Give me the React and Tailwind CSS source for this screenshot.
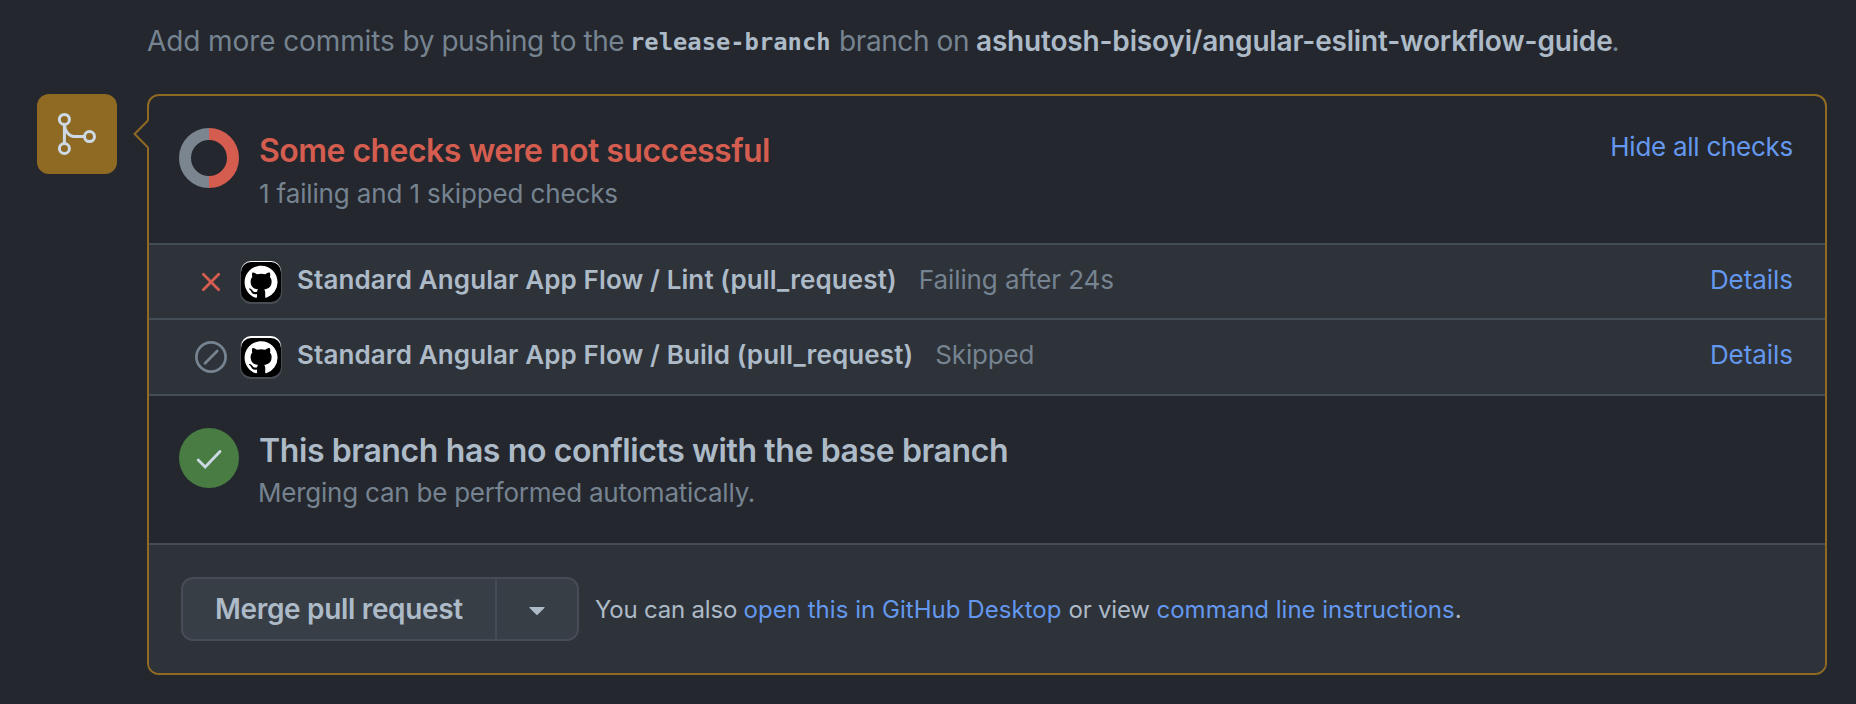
const OCTOCAT =
  "M8 0C3.58 0 0 3.58 0 8c0 3.54 2.29 6.53 5.47 7.59.4.07.55-.17.55-.38 0-.19-.01-.82-.01-1.49-2.01.37-2.53-.49-2.69-.94-.09-.23-.48-.94-.82-1.13-.28-.15-.68-.52-.01-.53.63-.01 1.08.58 1.23.82.72 1.21 1.87.87 2.33.66.07-.52.28-.87.51-1.07-1.78-.2-3.64-.89-3.64-3.95 0-.87.31-1.59.82-2.15-.08-.2-.36-1.02.08-2.12 0 0 .67-.21 2.2.82.64-.18 1.32-.27 2-.27.68 0 1.36.09 2 .27 1.53-1.04 2.2-.82 2.2-.82.44 1.1.16 1.92.08 2.12.51.56.82 1.27.82 2.15 0 3.07-1.87 3.75-3.65 3.95.29.25.54.73.54 1.48 0 1.07-.01 1.93-.01 2.2 0 .21.15.46.55.38A8.013 8.013 0 0016 8c0-4.42-3.58-8-8-8z";

function MergeIcon() {
  return (
    <svg width="80" height="80" viewBox="0 0 80 80" fill="none" stroke="#cdd9e5" strokeWidth="3">
      <circle cx="27.4" cy="25.4" r="5" />
      <circle cx="27.4" cy="54.5" r="5" />
      <circle cx="52.5" cy="42.6" r="5" />
      <path d="M27.4 30.5V49.5M27.4 30.5C27.8 37.5 32 42.6 39 42.6H47.5" />
    </svg>
  );
}

function Donut() {
  return (
    <svg className="shrink-0" width="60" height="60" viewBox="0 0 60 60" fill="none" strokeWidth="12">
      <path d="M30 6A24 24 0 0 0 30 54" stroke="#7b858f" />
      <path d="M30 6A24 24 0 0 1 30 54" stroke="#d45d50" />
    </svg>
  );
}

function FailIcon() {
  return (
    <svg width="32" height="32" viewBox="0 0 32 32" fill="none" stroke="#d45d50" strokeWidth="2.8" strokeLinecap="round">
      <path d="M8.3 8.3L23.7 23.7M23.7 8.3L8.3 23.7" />
    </svg>
  );
}

function SkipIcon() {
  return (
    <svg width="32" height="32" viewBox="0 0 32 32" fill="none" stroke="#768390" strokeWidth="2.7" strokeLinecap="round">
      <circle cx="16" cy="16" r="14.6" />
      <path d="M10 22.2L22.2 10" />
    </svg>
  );
}

function Avatar({ highlight }) {
  return (
    <svg className="overflow-visible" width="40" height="42" viewBox="0 0 40 42">
      <rect x="-1" y="0.5" width="42" height="42.5" rx="11" fill="#484d54" />
      <rect width="40" height="38" rx="10" fill="#fff" />
      <rect y={highlight} width="40" height={41 - highlight} rx="10" fill="#000" />
      <path d={OCTOCAT} fill="#fff" transform={`translate(3.6 ${4.2 + highlight / 2}) scale(2.06)`} />
    </svg>
  );
}

function CheckRow({ icon, name, status, nameClass, statusClass, rowClass, highlight }) {
  return (
    <div className={`flex items-start border-t-2 border-[#444c56] bg-[#2e3239] pr-8 pl-[46px] text-[26px] leading-9 ${rowClass}`}>
      <div className="mt-[21px] h-8 w-8">{icon}</div>
      <div className="mt-4 ml-[14px] h-[42px] w-10">
        <Avatar highlight={highlight} />
      </div>
      <span className={`mt-[17px] ml-4 font-semibold text-[#adbac7] ${nameClass}`}>{name}</span>
      <span className={`mt-[17px] ml-[22px] text-[#768390] ${statusClass}`}>{status}</span>
      <a className="mt-[17px] ml-auto tracking-[-0.05px] text-[#6498ee]">Details</a>
    </div>
  );
}

export default function App() {
  return (
    <div className="h-[704px] w-[1856px] overflow-hidden bg-[#24272e] font-['Inter',sans-serif] whitespace-nowrap">
      <p className="flex h-[94px] items-start pt-[23px] pl-[147px] text-[28px] leading-9 text-[#768390]">
        <span className="w-[483px] tracking-[-0.12px]">
          <span className="tracking-[-0.1px]">Add more commits </span>
          <span className="tracking-[-0.45px]">by pushing to the</span>
        </span>
        <span className="w-[209px] pt-px font-['DejaVu_Sans_Mono',monospace] text-[23.8px] font-bold text-[#adbac7]">release-branch</span>
        <span className="w-[137px] tracking-[-0.4px]">branch on</span>
        <span className="font-semibold tracking-[-0.18px] text-[#adbac7]">ashutosh-bisoyi/angular-eslint-workflow-guide</span>
        <span className="-ml-px">.</span>
      </p>

      <div className="flex items-start pl-[37px]">
        <div className="h-20 w-20 rounded-xl bg-[#8f6a23]">
          <MergeIcon />
        </div>

        <div className="relative ml-[30px] h-[581px] w-[1680px] rounded-xl border-2 border-[#8f6a23]">
          <svg className="absolute top-[23px] left-[-17px]" width="18" height="30" viewBox="0 0 18 30" fill="none">
            <path d="M18 1.5L15 1.5L3 15L15 28.5L18 28.5Z" fill="#24272e" />
            <path d="M16.2 1.2L2.6 15L16.2 28.8" stroke="#8f6a23" strokeWidth="2" />
          </svg>

          <div className="flex h-[147px] items-start pt-8 pr-8 pl-[30px]">
            <Donut />
            <div className="ml-[19px] pt-[3px]">
              <h3 className="ml-px text-[32px] leading-10 font-semibold tracking-[-0.53px] text-[#d45d50]">Some checks were not successful</h3>
              <p className="ml-px mt-[5px] text-[26px] leading-9 tracking-[-0.14px] text-[#768390]">1 failing and 1 skipped checks</p>
            </div>
            <a className="mt-px ml-auto text-[26px] leading-9 tracking-[-0.27px] text-[#6498ee]">Hide all checks</a>
          </div>

          <CheckRow
            icon={<FailIcon />}
            name="Standard Angular App Flow / Lint (pull_request)"
            status="Failing after 24s"
            nameClass="tracking-[0.11px]"
            statusClass="tracking-[-0.09px]"
            rowClass="h-[75px]"
            highlight={1}
          />
          <CheckRow
            icon={<SkipIcon />}
            name="Standard Angular App Flow / Build (pull_request)"
            status="Skipped"
            nameClass="tracking-[0.11px]"
            statusClass="tracking-[-0.15px]"
            rowClass="h-[76px]"
            highlight={2}
          />

          <div className="flex h-[149px] items-start border-t-2 border-[#444c56] pt-8 pl-[30px]">
            <svg className="shrink-0" width="60" height="60" viewBox="0 0 60 60" fill="none">
              <circle cx="30" cy="30" r="30" fill="#487c43" />
              <path d="M19.2 32L26.2 39L41 23.5" stroke="#cdd9e5" strokeWidth="2.8" strokeLinecap="round" />
            </svg>
            <div className="ml-5 pt-[3px]">
              <h3 className="text-[32px] leading-10 font-semibold tracking-[-0.39px] text-[#adbac7]">This branch has no conflicts with the base branch</h3>
              <p className="-ml-px mt-1 text-[26px] leading-9 tracking-[-0.23px] text-[#768390]">Merging can be performed automatically.</p>
            </div>
          </div>

          <div className="flex h-[130px] items-start rounded-b-[10px] border-t-2 border-[#444c56] bg-[#2e3239] pt-8 pl-8">
            <div className="flex h-16 w-[398px] rounded-xl border-2 border-[#464c55] bg-[#383e45]">
              <button className="w-[314px] border-r-2 border-[#464c55] pl-8 text-left text-[28px] leading-[59px] font-semibold tracking-[-0.33px] text-[#adbac7]">
                Merge pull request
              </button>
              <button className="flex flex-1 items-center justify-center pt-1">
                <svg width="16" height="8" viewBox="0 0 16 8">
                  <path d="M0.8 0H15.2Q16 0.2 15.4 0.9L8.6 7.7Q8 8.2 7.4 7.7L0.6 0.9Q0 0.2 0.8 0Z" fill="#adbac7" />
                </svg>
              </button>
            </div>
            <p className="flex pt-[15px] pl-4 text-[24px] leading-9 text-[#adbac7]">
              <span className="w-[148.5px] tracking-[-0.2px]">You can also</span>
              <a className="w-[325px] tracking-[0.04px] text-[#6498ee]">open this in GitHub Desktop</a>
              <span className="w-[88px] tracking-[-0.2px]">or view</span>
              <a className="text-[#6498ee]">command line instructions</a>
              <span>.</span>
            </p>
          </div>
        </div>
      </div>
    </div>
  );
}
